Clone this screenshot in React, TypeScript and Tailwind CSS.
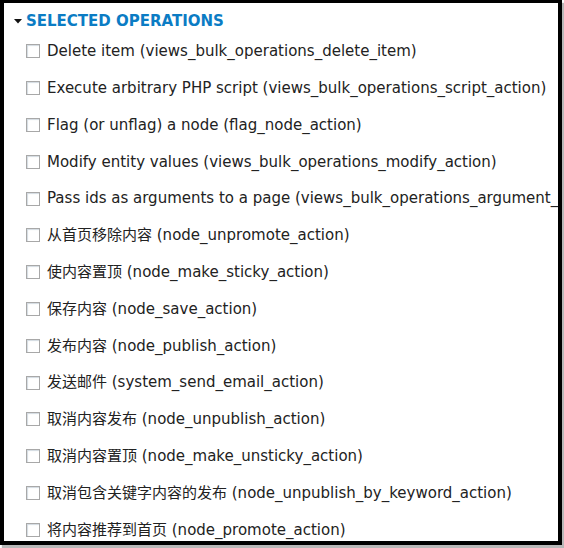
const operations = [
  "Delete item (views_bulk_operations_delete_item)",
  "Execute arbitrary PHP script (views_bulk_operations_script_action)",
  "Flag (or unflag) a node (flag_node_action)",
  "Modify entity values (views_bulk_operations_modify_action)",
  "Pass ids as arguments to a page (views_bulk_operations_argument_",
  "从首页移除内容 (node_unpromote_action)",
  "使内容置顶 (node_make_sticky_action)",
  "保存内容 (node_save_action)",
  "发布内容 (node_publish_action)",
  "发送邮件 (system_send_email_action)",
  "取消内容发布 (node_unpublish_action)",
  "取消内容置顶 (node_make_unsticky_action)",
  "取消包含关键字内容的发布 (node_unpublish_by_keyword_action)",
  "将内容推荐到首页 (node_promote_action)",
]

function Checkbox() {
  return (
    <span className="w-[14px] h-[14px] shrink-0 border border-[#a8a8a8] bg-white shadow-[inset_1px_1px_1px_#d3dbe2]" />
  )
}

export default function App() {
  return (
    <div className="w-[564px] h-[548px] bg-white">
      <div className="w-[562px] h-[545px] border-x-4 border-t-[3px] border-b-4 border-black bg-white overflow-hidden shadow-[2px_3px_1px_#b8b8b8] font-['DejaVu_Sans','Noto_Sans_CJK_SC',sans-serif]">
        <div className="flex items-center h-[30px] pl-[10px] pt-[6px]">
          <svg width="8" height="5" viewBox="0 0 8 5" className="mr-[4px]">
            <path d="M0 0 L8 0 L4 4.5 Z" fill="#111" />
          </svg>
          <span className="text-[15px] leading-[20px] font-bold uppercase text-[#0b7cc4]">
            Selected operations
          </span>
        </div>
        <div className="flex flex-col">
          {operations.map((op) => (
            <label key={op} className="flex items-center h-[36.8px] pl-[22px] gap-[7px] whitespace-nowrap">
              <Checkbox />
              <span className="text-[15px] text-[#222]">{op}</span>
            </label>
          ))}
        </div>
      </div>
    </div>
  )
}
